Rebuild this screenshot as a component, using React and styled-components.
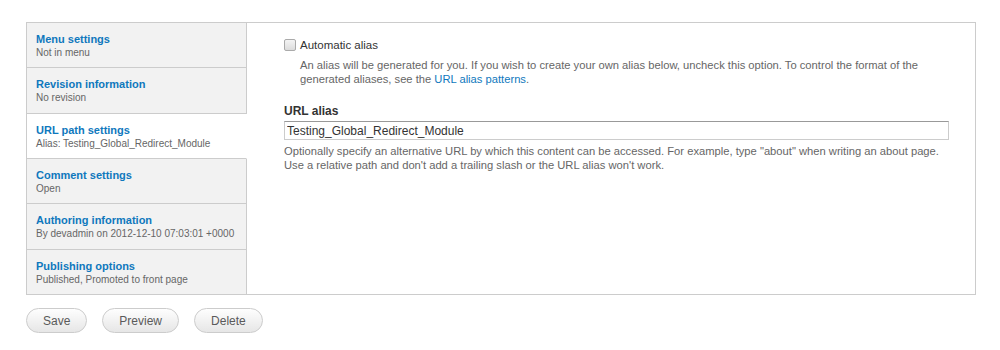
import React from 'react'
import styled, { createGlobalStyle } from 'styled-components';

const tabs = [
  { title: "Menu settings", summary: "Not in menu" },
  { title: "Revision information", summary: "No revision" },
  { title: "URL path settings", summary: "Alias: Testing_Global_Redirect_Module" },
  { title: "Comment settings", summary: "Open" },
  { title: "Authoring information", summary: "By devadmin on 2012-12-10 07:03:01 +0000" },
  { title: "Publishing options", summary: "Published, Promoted to front page" },
]

const GlobalStyle = createGlobalStyle`
  body {
    margin: 0;
    background: #fff;
    font-family: "Liberation Sans", Arial, sans-serif;
    color: #333;
  }
`;

const Page = styled.div`
  padding: 22px 24px 0 26px;
`;

const VerticalTabs = styled.div`
  display: flex;
  border: 1px solid #ccc;
  width: 948px;
`;

const TabList = styled.ul`
  list-style: none;
  margin: 0;
  padding: 0;
  width: 220px;
  display: flex;
  flex-direction: column;
`;

const Tab = styled.li`
  flex: 1;
  padding: 9px 9px 0 9px;
  background: ${(props) => (props.selected ? '#fff' : '#f2f2f2')};
  border-right: 1px solid ${(props) => (props.selected ? 'transparent' : '#ccc')};
  border-bottom: ${(props) => (props.last ? 'none' : '1px solid #ccc')};
  cursor: pointer;
`;

const TabTitle = styled.div`
  font-size: 11px;
  line-height: 14px;
  font-weight: bold;
  color: #0f78bd;
`;

const TabSummary = styled.div`
  font-size: 10px;
  line-height: 14px;
  color: #666;
`;

const Pane = styled.div`
  flex: 1;
  padding: 15px 26px 0 37px;
  min-height: 256px;
`;

const CheckRow = styled.label`
  display: flex;
  align-items: center;
  gap: 4px;
  font-size: 11.5px;
  color: #333;
  height: 14px;
`;

const Checkbox = styled.span`
  width: 10px;
  height: 10px;
  border: 1px solid #aaa;
  border-radius: 2px;
  background: linear-gradient(#f4f4f4, #dcdcdc);
`;

const Description = styled.div`
  font-size: 11.2px;
  line-height: 14px;
  color: #666;
  margin: ${(props) => props.margin || '0'};
`;

const Link = styled.a`
  color: #0f78bd;
  text-decoration: none;
`;

const FieldLabel = styled.div`
  font-size: 12px;
  font-weight: bold;
  color: #333;
  line-height: 14px;
  margin-top: 18px;
`;

const TextInput = styled.input`
  display: block;
  box-sizing: border-box;
  width: 665px;
  height: 19px;
  margin: 3px 0 4px;
  padding: 0 2px;
  border: 1px solid #ccc;
  border-top-color: #999;
  font-family: "Liberation Sans", Arial, sans-serif;
  font-size: 12px;
  color: #333;
  outline: none;
`;

const Actions = styled.div`
  display: flex;
  gap: 15px;
  padding-top: 13px;
`;

const Button = styled.button`
  height: 25px;
  padding: 0 16px;
  border: 1px solid #ccc;
  border-radius: 13px;
  background: linear-gradient(#fefefe, #e6e6e6);
  font-family: "Liberation Sans", Arial, sans-serif;
  font-size: 12px;
  color: #5a5a5a;
  cursor: pointer;
`;

const App = () => {
  const [active, setActive] = React.useState(2)
  return (
    <Page>
      <GlobalStyle />
      <VerticalTabs>
        <TabList>
          {tabs.map((tab, i) => (
            <Tab key={tab.title} selected={i === active} last={i === tabs.length - 1} onClick={() => setActive(i)}>
              <TabTitle>{tab.title}</TabTitle>
              <TabSummary>{tab.summary}</TabSummary>
            </Tab>
          ))}
        </TabList>
        <Pane>
          <CheckRow>
            <Checkbox />
            Automatic alias
          </CheckRow>
          <Description margin="6px 0 0 16px">
            An alias will be generated for you. If you wish to create your own alias below, uncheck this option. To control the format of the
            generated aliases, see the <Link href="#">URL alias patterns</Link>.
          </Description>
          <FieldLabel>URL alias</FieldLabel>
          <TextInput defaultValue="Testing_Global_Redirect_Module" />
          <Description>
            Optionally specify an alternative URL by which this content can be accessed. For example, type "about" when writing an about page.
            <br />
            Use a relative path and don't add a trailing slash or the URL alias won't work.
          </Description>
        </Pane>
      </VerticalTabs>
      <Actions>
        <Button>Save</Button>
        <Button>Preview</Button>
        <Button>Delete</Button>
      </Actions>
    </Page>
  );
}

export default App
